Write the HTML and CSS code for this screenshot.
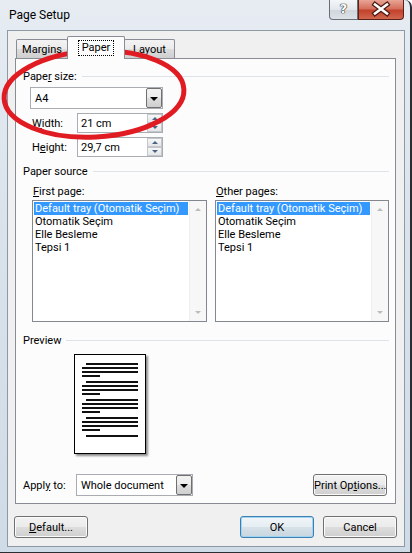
FILE: index.html
```html
<!DOCTYPE html>
<html lang="en">
<head>
    <meta charset="UTF-8">
    <title>Page Setup</title>
    <link rel="stylesheet" href="styles.css">
</head>
<body>
    <div class="window">
        <!-- Title bar -->
        <div class="titlebar">
            <span class="title">Page Setup</span>
            <div class="caption">
                <div class="cap-help">?</div>
                <div class="cap-close">
                    <svg width="44" height="18" viewBox="0 0 44 18">
                        <path d="M16 4.5 L28 13.5 M28 4.5 L16 13.5" stroke="#4a1a12" stroke-width="5" stroke-linecap="square" fill="none"/>
                        <path d="M16 4.5 L28 13.5 M28 4.5 L16 13.5" stroke="#ffffff" stroke-width="2.6" stroke-linecap="square" fill="none"/>
                    </svg>
                </div>
            </div>
        </div>

        <div class="client">
            <!-- Tabs -->
            <div class="tabs">
                <div class="tab tab-margins">Margins</div>
                <div class="tab tab-paper active"><span class="focus">Paper</span></div>
                <div class="tab tab-layout">Layout</div>
            </div>

            <div class="panel">
                <div class="group g-size"><span>Pape<u>r</u> size:</span><div class="rule"></div></div>
                <div class="combo combo-size">
                    <div class="combo-text">A4</div>
                    <div class="combo-btn"><div class="tri-down"></div></div>
                </div>
                <div class="field-row fr-width">
                    <label><u>W</u>idth:</label>
                    <div class="spin">
                        <div class="spin-text">21 cm</div>
                        <div class="spin-btns"><div class="sb"><div class="sb-up"></div></div><div class="sb"><div class="sb-down"></div></div></div>
                    </div>
                </div>
                <div class="field-row fr-height">
                    <label>H<u>e</u>ight:</label>
                    <div class="spin">
                        <div class="spin-text">29,7 cm</div>
                        <div class="spin-btns"><div class="sb"><div class="sb-up"></div></div><div class="sb"><div class="sb-down"></div></div></div>
                    </div>
                </div>

                <div class="group g-source"><span>Paper source</span><div class="rule"></div></div>
                <div class="lists">
                    <div class="list-col first">
                        <div class="list-label"><u>F</u>irst page:</div>
                        <div class="listbox">
                            <div class="items">
                                <div class="item selected">Default tray (Otomatik Seçim)</div>
                                <div class="item">Otomatik Seçim</div>
                                <div class="item">Elle Besleme</div>
                                <div class="item">Tepsi 1</div>
                            </div>
                            <div class="vscroll"><div class="arr-up"></div><div class="arr-down"></div></div>
                        </div>
                    </div>
                    <div class="list-col other">
                        <div class="list-label"><u>O</u>ther pages:</div>
                        <div class="listbox">
                            <div class="items">
                                <div class="item selected">Default tray (Otomatik Seçim)</div>
                                <div class="item">Otomatik Seçim</div>
                                <div class="item">Elle Besleme</div>
                                <div class="item">Tepsi 1</div>
                            </div>
                            <div class="vscroll"><div class="arr-up"></div><div class="arr-down"></div></div>
                        </div>
                    </div>
                </div>

                <div class="group g-preview"><span>Preview</span><div class="rule"></div></div>
                <div class="preview">
                    <div class="page">
                        <div class="para"><div class="ln ind"></div><div class="ln"></div><div class="ln"></div><div class="ln short"></div></div>
                        <div class="para"><div class="ln ind"></div><div class="ln"></div><div class="ln"></div><div class="ln short"></div></div>
                        <div class="para"><div class="ln ind"></div><div class="ln"></div><div class="ln"></div><div class="ln short"></div></div>
                        <div class="para"><div class="ln ind"></div><div class="ln"></div><div class="ln"></div><div class="ln short"></div></div>
                        <div class="para"><div class="ln ind"></div></div>
                    </div>
                </div>

                <div class="apply-row">
                    <label>Appl<u>y</u> to:</label>
                    <div class="combo combo-apply">
                        <div class="combo-text">Whole document</div>
                        <div class="combo-btn"><div class="tri-down"></div></div>
                    </div>
                    <button class="btn btn-print">Print Op<u>t</u>ions...</button>
                </div>
            </div>

            <div class="footer">
                <button class="btn"><u>D</u>efault...</button>
                <button class="btn default push">OK</button>
                <button class="btn">Cancel</button>
            </div>
        </div>

        <!-- red marker ellipse drawn over the dialog -->
        <svg class="marker" width="412" height="553" viewBox="0 0 412 553">
            <ellipse cx="94" cy="94" rx="90" ry="43" transform="rotate(-3 94 94)" fill="none" stroke="#e11b22" stroke-width="5"/>
        </svg>
    </div>
</body>
</html>
```

FILE: styles.css
```css
body {
    margin: 0;
    font-family: Roboto, "Noto Sans", sans-serif;
    font-size: 11px;
    color: #000;
    background: #fff;
}
.window {
    position: relative;
    width: 412px;
    height: 553px;
    box-sizing: border-box;
    border-right: 2px solid #2a2d31;
    border-bottom: 1px solid #2a2d31;
    border-top-right-radius: 7px;
    background: linear-gradient(180deg, #e6ecf2 0%, #dae3ec 40%, #cfdbe7 100%);
    overflow: hidden;
}
.titlebar {
    display: flex;
    height: 30px;
}
.title {
    padding-left: 9px;
    line-height: 31px;
    font-size: 12px;
}
.caption {
    display: flex;
    margin-left: auto;
    margin-right: 6px;
    height: 20px;
}
.cap-help {
    width: 27px;
    height: 19px;
    border: 1px solid #6a6f76;
    border-top: none;
    border-bottom-left-radius: 4px;
    background: linear-gradient(180deg, #f4f6f8 0%, #e3e7ec 50%, #cfd5dc 51%, #dde2e8 100%);
    color: #fff;
    font-family: "DejaVu Sans", sans-serif;
    font-weight: bold;
    font-size: 13px;
    line-height: 18px;
    text-align: center;
    text-shadow: 0 0 1px #222, 0 0 1px #222, 0 0 1px #222;
}
.cap-close {
    width: 44px;
    height: 19px;
    border: 1px solid #5c2218;
    border-top: none;
    border-bottom-right-radius: 4px;
    background: linear-gradient(180deg, #e9a596 0%, #d5705d 45%, #c2422b 55%, #d1664f 100%);
}
.cap-close svg {
    display: block;
}

/* client area */
.client {
    margin-left: 7px;
    width: 398px;
    height: 517px;
    box-sizing: border-box;
    border: 1px solid #8e99a6;
    background: #f0f0f0;
    padding: 5px 8px 0 7px;
}
.tabs {
    display: flex;
    align-items: flex-end;
    height: 22px;
    padding-left: 1px;
}
.tab {
    box-sizing: border-box;
    height: 19px;
    border: 1px solid #898c95;
    border-bottom: none;
    border-radius: 2px 2px 0 0;
    background: linear-gradient(180deg, #f3f3f3 0%, #ebebeb 50%, #dddddd 51%, #cfcfcf 100%);
    text-align: center;
    line-height: 19px;
}
.tab-margins { width: 52px; }
.tab-paper { width: 58px; margin-left: -1px; }
.tab-layout { width: 51px; margin-left: -1px; }
.tab.active {
    position: relative;
    z-index: 1;
    height: 23px;
    margin-bottom: -1px;
    background: #fcfcfc;
    line-height: 21px;
}
.focus {
    display: inline-block;
    padding: 0 3px;
    line-height: 14px;
    outline: 1px dotted #000;
}

.panel {
    box-sizing: border-box;
    height: 446px;
    border: 1px solid #898c95;
    background: #fcfcfc;
    padding: 0 6px 0 7px;
    display: flex;
    flex-direction: column;
}
.group {
    display: flex;
    align-items: center;
    gap: 5px;
    line-height: 15px;
    height: 15px;
}
.rule {
    flex: 1;
    height: 1px;
    background: #dde3e8;
}
.g-size { margin-top: 10px; }
.g-source { margin-top: 7px; }
.g-preview { margin-top: 11px; }

.combo {
    box-sizing: border-box;
    display: flex;
    height: 22px;
    border: 1px solid #a9acb2;
    background: #fff;
}
.combo-text {
    flex: 1;
    padding-left: 4px;
    padding-top: 1px;
    line-height: 20px;
    height: 19px;
}
.combo-btn {
    box-sizing: border-box;
    width: 16px;
    border: 1px solid #707070;
    border-radius: 2px;
    background: linear-gradient(180deg, #f2f2f2 0%, #ebebeb 50%, #dddddd 51%, #cfcfcf 100%);
    display: flex;
    align-items: center;
    justify-content: center;
}
.tri-down {
    width: 0;
    height: 0;
    border-left: 4px solid transparent;
    border-right: 4px solid transparent;
    border-top: 4px solid #000;
    margin-top: 1px;
}
.combo-size {
    margin-top: 3px;
    margin-left: 7px;
    width: 133px;
}

.field-row {
    display: flex;
    align-items: center;
    height: 20px;
    margin-left: 9px;
}
.fr-width { margin-top: 4px; }
.fr-height { margin-top: 4px; }
.field-row label {
    width: 45px;
    padding-top: 1px;
}
.spin {
    box-sizing: border-box;
    display: flex;
    width: 86px;
    height: 20px;
    border: 1px solid #a9acb2;
    background: #fff;
}
.spin-text {
    flex: 1;
    padding-left: 3px;
    padding-top: 1px;
    line-height: 17px;
}
.spin-btns {
    width: 15px;
    display: flex;
    flex-direction: column;
}
.sb {
    flex: 1;
    box-sizing: border-box;
    border: 1px solid #c3c7cc;
    background: linear-gradient(180deg, #f7f7f7, #e3e5e8);
    display: flex;
    align-items: center;
    justify-content: center;
}
.sb-up, .sb-down {
    width: 0;
    height: 0;
    border-left: 3px solid transparent;
    border-right: 3px solid transparent;
}
.sb-up { border-bottom: 3px solid #4d6185; }
.sb-down { border-top: 3px solid #4d6185; }

/* lists */
.lists {
    display: flex;
    margin-top: 4px;
}
.list-col.first {
    margin-left: 9px;
    width: 175px;
}
.list-col.other {
    margin-left: 8px;
    width: 174px;
}
.list-label {
    line-height: 15px;
    padding-left: 1px;
    padding-top: 1px;
    margin-bottom: 1px;
}
.listbox {
    box-sizing: border-box;
    display: flex;
    height: 122px;
    border: 1px solid #828790;
    background: #fff;
}
.items {
    flex: 1;
    min-width: 0;
    padding: 1px 1px 0 1px;
}
.item {
    line-height: 14px;
    height: 13px;
    padding-left: 1px;
    white-space: nowrap;
}
.item.selected {
    background: #3399ff;
    color: #fff;
}
.vscroll {
    width: 16px;
    flex-shrink: 0;
    background: #f7f7f7;
    border-left: 1px solid #efefef;
    display: flex;
    flex-direction: column;
    justify-content: space-between;
    align-items: center;
    padding: 7px 0 7px;
}
.arr-up, .arr-down {
    width: 0;
    height: 0;
    border-left: 3px solid transparent;
    border-right: 3px solid transparent;
}
.arr-up { border-bottom: 3px solid #bcbcbc; }
.arr-down { border-top: 3px solid #bcbcbc; }

/* preview */
.preview {
    margin-top: 6px;
    height: 100px;
}
.page {
    box-sizing: border-box;
    width: 72px;
    height: 100px;
    margin-left: 51px;
    border: 1px solid #000;
    background: #fff;
    box-shadow: 2px 2px 2px rgba(0, 0, 0, 0.45);
    padding: 8px 7px 0 7px;
}
.para {
    margin-bottom: 4px;
}
.ln {
    height: 2px;
    margin-bottom: 2px;
    background: #111;
}
.ln.ind { margin-left: 4px; }
.ln.short { width: 18px; }

.apply-row {
    display: flex;
    align-items: center;
    margin-top: 20px;
    height: 22px;
}
.apply-row label {
    width: 53px;
    padding-top: 1px;
}
.combo-apply {
    width: 117px;
}
.btn-print {
    margin-left: auto;
    margin-right: 2px;
    width: 91px;
}

/* buttons */
.btn {
    box-sizing: border-box;
    height: 22px;
    width: 74px;
    padding: 1px 0 0 0;
    border: 1px solid #707070;
    border-radius: 3px;
    background: linear-gradient(180deg, #f2f2f2 0%, #ebebeb 50%, #dddddd 51%, #cfcfcf 100%);
    box-shadow: inset 0 0 0 1px #fbfbfb;
    font-family: Roboto, "Noto Sans", sans-serif;
    font-size: 11px;
    color: #000;
    line-height: 18px;
    white-space: nowrap;
}
.btn.default {
    border-color: #3c7fb1;
    box-shadow: inset 0 0 0 1px #9fd5f3;
    background: linear-gradient(180deg, #f0f5f8 0%, #e6eef3 50%, #d6e1e8 51%, #c9d6df 100%);
}
.footer {
    display: flex;
    gap: 9px;
    margin-top: 12px;
    margin-left: -1px;
    margin-right: -1px;
}
.push {
    margin-left: auto;
}

.marker {
    position: absolute;
    left: 0;
    top: 0;
    pointer-events: none;
}
```
